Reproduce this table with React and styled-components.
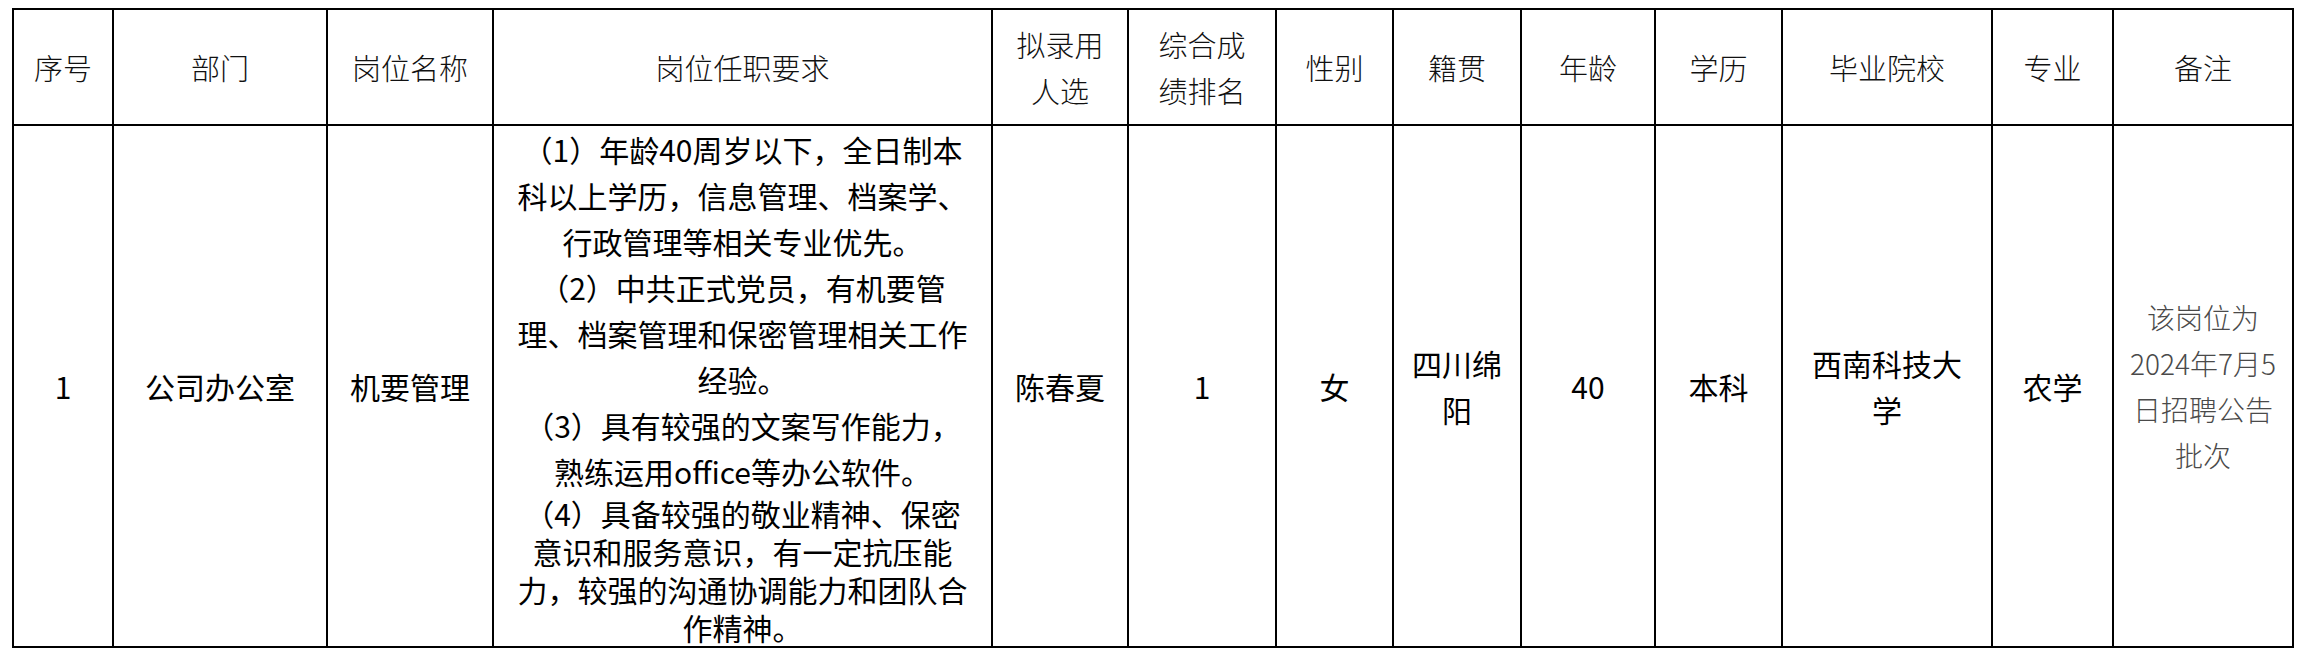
import React from 'react';
import styled, { createGlobalStyle } from 'styled-components';

// GLOBAL
const GlobalStyle = createGlobalStyle`
    html, body
    {
        margin: 0;
        padding: 0;
        background: #fff;
    }

    body
    {
        font-family: "Noto Sans CJK SC", "Noto Sans", sans-serif;
        color: #000;
    }
`;

// STYLED COMPONENTS
const Page = styled.div`
    padding: 8px 0 0 12px;
    width: 2300px;
    height: 657px;
    box-sizing: border-box;
`;

const Table = styled.table`
    border-collapse: collapse;
    table-layout: fixed;
    width: 2281px;
`;

const HeadCell = styled.th`
    height: 114px;
    padding: 0;
    border: 2px solid #000;
    font-weight: 300;
    font-size: 29px;
    line-height: ${(props) => (props.twoLine ? '58px' : '34px')};
    text-align: center;
    vertical-align: middle;
    color: #111;
`;

const BodyCell = styled.td`
    height: 518px;
    padding: 0;
    border: 2px solid #000;
    font-size: 30px;
    line-height: 47px;
    text-align: center;
    vertical-align: ${(props) => (props.top ? 'top' : 'middle')};
`;

const Line = styled.div`
    white-space: nowrap;
    line-height: ${(props) => props.lh || 46}px;
`;

const Remark = styled.div`
    font-size: 28px;
    font-weight: 300;
    line-height: 44.5px;
    color: #4a4a4a;
`;

// DATA
const columns = [
    { title: '序号', width: 100 },
    { title: '部门', width: 214 },
    { title: '岗位名称', width: 166 },
    { title: '岗位任职要求', width: 499 },
    { title: ['拟录用', '人选'], width: 136 },
    { title: ['综合成', '绩排名'], width: 148 },
    { title: '性别', width: 117 },
    { title: '籍贯', width: 128 },
    { title: '年龄', width: 134 },
    { title: '学历', width: 127 },
    { title: '毕业院校', width: 210 },
    { title: '专业', width: 121 },
    { title: '备注', width: 180 },
];

const requirements = [
    { lh: 46, text: '（1）年龄40周岁以下，全日制本' },
    { lh: 46, text: '科以上学历，信息管理、档案学、' },
    { lh: 46, text: '行政管理等相关专业优先。' },
    { lh: 46, text: '（2）中共正式党员，有机要管' },
    { lh: 46, text: '理、档案管理和保密管理相关工作' },
    { lh: 46, text: '经验。' },
    { lh: 46, text: '（3）具有较强的文案写作能力，' },
    { lh: 46, text: '熟练运用office等办公软件。' },
    { lh: 38, text: '（4）具备较强的敬业精神、保密' },
    { lh: 38, text: '意识和服务意识，有一定抗压能' },
    { lh: 38, text: '力，较强的沟通协调能力和团队合' },
    { lh: 38, text: '作精神。' },
];

const lines = (items) => items.map((item, index) => (
    <Line key={index}>{item}</Line>
));

// COMPONENT DEFINITION
const App = () =>
{
    return (
        <Page>
            <GlobalStyle />
            <Table>
                <colgroup>
                    {columns.map((col, index) => (
                        <col key={index} style={{ width: col.width }} />
                    ))}
                </colgroup>

                <thead>
                    <tr>
                        {columns.map((col, index) => (
                            <HeadCell key={index} twoLine={Array.isArray(col.title)}>
                                {Array.isArray(col.title) ? lines(col.title) : col.title}
                            </HeadCell>
                        ))}
                    </tr>
                </thead>

                <tbody>
                    <tr>
                        <BodyCell>1</BodyCell>
                        <BodyCell>公司办公室</BodyCell>
                        <BodyCell>机要管理</BodyCell>
                        <BodyCell top>
                            {requirements.map((row, index) => (
                                <Line key={index} lh={row.lh}>{row.text}</Line>
                            ))}
                        </BodyCell>
                        <BodyCell>陈春夏</BodyCell>
                        <BodyCell>1</BodyCell>
                        <BodyCell>女</BodyCell>
                        <BodyCell>
                            {lines(['四川绵', '阳'])}
                        </BodyCell>
                        <BodyCell>40</BodyCell>
                        <BodyCell>本科</BodyCell>
                        <BodyCell>
                            {lines(['西南科技大', '学'])}
                        </BodyCell>
                        <BodyCell>农学</BodyCell>
                        <BodyCell>
                            <Remark>
                                {lines(['该岗位为', '2024年7月5', '日招聘公告', '批次'])}
                            </Remark>
                        </BodyCell>
                    </tr>
                </tbody>
            </Table>
        </Page>
    );
};

export default App;
